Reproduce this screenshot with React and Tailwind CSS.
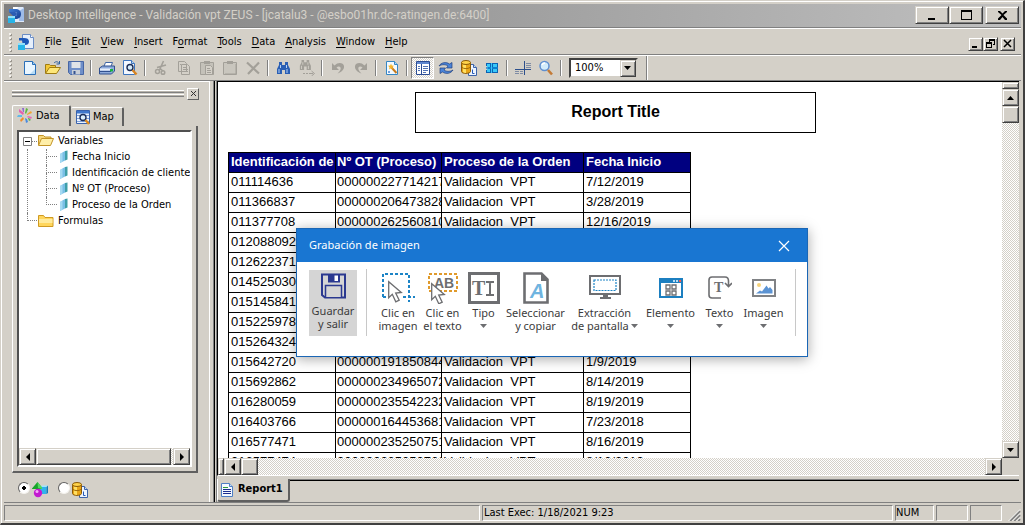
import React from "react";

const RAISED =
  "border border-t-[#d4d0c8] border-l-[#d4d0c8] border-r-[#404040] border-b-[#404040] bg-[#d4d0c8] shadow-[inset_1px_1px_0_#fff,inset_-1px_-1px_0_#808080]";
const THIN_RAISED = "border border-t-white border-l-white border-r-[#606060] border-b-[#606060] bg-[#d4d0c8]";
const SUNKEN = "border border-t-[#808080] border-l-[#808080] border-r-white border-b-white";
const DITHER = "bg-[repeating-conic-gradient(#fff_0_25%,#d4d0c8_0_50%)] bg-[length:2px_2px]";
const TAHOMA = "font-['DejaVu_Sans_Condensed','DejaVu_Sans',sans-serif] text-[11px]";

function Icon({ children }) {
  return (
    <svg width="16" height="16" viewBox="0 0 16 16" className="shrink-0" aria-hidden="true">
      {children}
    </svg>
  );
}

/* ---------- 16px icons ---------- */
function AppIcon() {
  return (
    <Icon>
      <defs>
        <linearGradient id="appBlue" x1="0" y1="0" x2="1" y2="1">
          <stop offset="0" stopColor="#3f7fd8" />
          <stop offset="1" stopColor="#12398c" />
        </linearGradient>
      </defs>
      <path d="M5 0h10l1 1v14H5z" fill="#dfeafa" />
      <path d="M5 0h5l-2 5H5z" fill="#fff" />
      <path d="M11 4l5-3v13h-5z" fill="#9dbbe8" />
      <path d="M0 9h7v7H0z" fill="#27b4e8" />
      <path d="M0 9h7v2H0z" fill="#8fe0fa" />
      <path d="M1 2h6c4 0 6 2 6 5s-2 5-6 5V9c1 0 2-.7 2-2S8 5 7 5H1z" fill="url(#appBlue)" />
      <path d="M1 5h6c1 0 2 1 2 2s-1 2-2 2H5z" fill="#2a5cb4" />
    </Icon>
  );
}
function DocIcon() {
  return (
    <Icon>
      <path d="M4.500.5h8l3 3v11h-11z" fill="#e6effb" stroke="#6a8cc4" />
      <path d="M12.500.5v3h3" fill="#fff" stroke="#6a8cc4" />
      <path d="M0 9h7v7H0z" fill="#27b4e8" />
      <path d="M0 9h7v2H0z" fill="#8fe0fa" />
      <path d="M1 4h5c3 0 5 1 5 3.500S9.500 11 7 11V9H5L4 6.500H1z" fill="#1d57b8" />
    </Icon>
  );
}
const NewIcon = () => (
  <Icon>
    <path d="M2.500 1.500h8l3 3v10h-11z" fill="#eaf6ff" stroke="#2a6fb8" />
    <path d="M10.500 1.500v3h3" fill="#9fd0f4" stroke="#2a6fb8" />
    <path d="M8 14l5-5v5z" fill="#b7dcf5" />
  </Icon>
);
const OpenIcon = () => (
  <Icon>
    <path d="M.5 13V4.500h4l1 1h5V8" fill="#f3c838" stroke="#a07c12" />
    <path d="M.5 13.500l4-6h11l-4 6z" fill="#fde77a" stroke="#a07c12" />
    <path d="M9 3c2-2 4-1.500 5 .5M14.500 1v3h-3" fill="none" stroke="#2d5f9e" />
  </Icon>
);
const SaveIcon = () => (
  <Icon>
    <path d="M.5 1.500h15v13h-13l-2-2z" fill="#6f8fc9" stroke="#4766a4" />
    <path d="M3.500 2h9v6h-9z" fill="#dfe3e8" />
    <path d="M4 10h8v4.500H4z" fill="#c9cfd8" />
    <path d="M5.500 11h2v3h-2z" fill="#35528f" />
  </Icon>
);
const PrintIcon = () => (
  <Icon>
    <path d="M6.500 2.500h7l-2 5h-7z" fill="#fff" stroke="#3d63a4" />
    <path d="M.5 8l3-2h12v5l-3 3H.5z" fill="#8fabdc" stroke="#31508f" />
    <path d="M1 8.500h11v2H1z" fill="#e8effa" />
    <path d="M1 11.500h11" stroke="#31508f" />
    <path d="M11 9h3v2.500h-3z" fill="#19b43a" />
  </Icon>
);
const PreviewIcon = () => (
  <Icon>
    <path d="M1.500.5h8l3 3v11h-11z" fill="#f3f8ff" stroke="#3d74bd" />
    <path d="M9.500.5v3h3" fill="#bcd8f4" stroke="#3d74bd" />
    <circle cx="8" cy="7.500" r="3" fill="#d5ecfb" stroke="#1b2c54" strokeWidth="1.400" />
    <path d="M10.500 10l4 4.500" stroke="#d88420" strokeWidth="2.400" />
  </Icon>
);
const G = "#a3a099";
const CutIcon = () => (
  <Icon>
    <path d="M10.500 1L6.500 10M4 7.500l9-2.500M7 8.500l3 2.500" fill="none" stroke={G} strokeWidth="1.600" />
    <circle cx="4.500" cy="11.500" r="2" fill="none" stroke={G} strokeWidth="1.500" />
    <circle cx="10" cy="12.500" r="1.800" fill="none" stroke={G} strokeWidth="1.500" />
  </Icon>
);
const CopyIcon = () => (
  <Icon>
    <path d="M2.500 1.500h6l2 2v8h-8zM5.500 4.500h6l2 2v8h-8z" fill="#d4d0c8" stroke={G} />
    <path d="M7 7.500h3M7 9.500h5M7 11.500h5M4 4.500h1" stroke={G} />
  </Icon>
);
const PasteIcon = () => (
  <Icon>
    <path d="M1.500 2.500h13v12h-13z" fill="#c4c1b9" stroke={G} />
    <path d="M5 1h6v3H5z" fill={G} />
    <path d="M6.500 5.500h5l2 2v7h-7z" fill="#d4d0c8" stroke={G} />
    <path d="M8 8.500h3M8 10.500h4M8 12.500h4" stroke={G} />
  </Icon>
);
const ClipIcon = () => (
  <Icon>
    <path d="M1.500 2.500h13v12h-13z" fill="#c9c6be" stroke={G} />
    <path d="M5 1h6v3H5z" fill={G} />
    <path d="M3 14h11M14 4v10" stroke={G} />
  </Icon>
);
const DeleteIcon = () => (
  <Icon>
    <path d="M2 2.500l12 11M14 2.500L3 14" stroke={G} strokeWidth="2.200" />
  </Icon>
);
function Binoculars({ color, light }) {
  return (
    <g>
      <path d="M3 2h3v3h3V2h3v3l2 4v5h-5v-4H6v4H1V9l2-4z" fill={color} />
      <path d="M2.500 9h1v4h-1zM10.500 9h1v4h-1zM4 5h1v3H4zM10 5h1v3h-1z" fill={light} />
    </g>
  );
}
const FindIcon = () => (
  <Icon>
    <Binoculars color="#2b5fb4" light="#b6d2f6" />
  </Icon>
);
const FindNextIcon = () => (
  <Icon>
    <g transform="translate(0 -2) scale(.85)">
      <Binoculars color={G} light="#d4d0c8" />
    </g>
    <path d="M4 13.500h2M7 13.500h2M10 13.500h4M12.500 11l3 2.500-3 2.500" fill="none" stroke={G} />
  </Icon>
);
const UndoIcon = () => (
  <Icon>
    <path d="M2 3v7h7L6.500 7.500c2-2 5-1 4 2-.5 1.500-1.500 2.500-3 4 4-1.500 7-4 6.500-7.500C13.500 2.500 8 1.500 4.500 5.500z" fill={G} />
  </Icon>
);
const RedoIcon = () => (
  <Icon>
    <path d="M14 3v7H7l2.500-2.500c-2-2-5-1-4 2 .5 1.500 1.500 2.500 3 4-4-1.500-7-4-6.500-7.500C2.500 2.500 8 1.500 11.500 5.500z" fill={G} />
  </Icon>
);
const WizardIcon = () => (
  <Icon>
    <path d="M2.500 1.500h8l3 3v10h-11z" fill="#f3faff" stroke="#3586c4" />
    <path d="M10.500 1.500v3h3" fill="#a9d8f4" stroke="#3586c4" />
    <path d="M7 7l5.500 6" stroke="#c67a1c" strokeWidth="2" />
    <path d="M7 3.500l.8 2 2.200.3-1.600 1.400.4 2.200L7 8.200l-1.900 1.200.4-2.200L4 5.800l2.200-.3z" fill="#f6b52a" />
    <path d="M4 12h2M5 11v2" stroke="#4b82d0" />
  </Icon>
);
const PanelIcon = () => (
  <Icon>
    <path d="M1.500 1.500h13v13h-13z" fill="#fff" stroke="#2b4c94" />
    <path d="M2 2h12v2H2z" fill="#5f87ce" />
    <path d="M6.500 4v10" stroke="#2b4c94" />
    <path d="M3 6.500h2M3 8.500h2M3 10.500h2M8 6.500h5M8 8.500h5M8 10.500h5M8 12.500h3" stroke="#5374b4" />
  </Icon>
);
const RefreshIcon = () => (
  <Icon>
    <path d="M1 6C3 2.500 8 1.500 11.500 4L14 2.500V8H8.500L10 6C8 4.500 4.500 4 1 6z" fill="#4a83d8" stroke="#23407c" strokeWidth=".7" />
    <path d="M15 10C13 13.500 8 14.500 4.500 12L2 13.500V8h5.500L6 10c2 1.500 5.500 2 9 0z" fill="#4a83d8" stroke="#23407c" strokeWidth=".7" />
  </Icon>
);
const DbIcon = () => (
  <Icon>
    <path d="M7.500 4.500h5l3 3v8h-8z" fill="#eef5ff" stroke="#3d63a8" />
    <path d="M12.500 4.500v3h3" fill="#c3dbf6" stroke="#3d63a8" />
    <path d="M11.500 9.500v4h2" fill="none" stroke="#2458b8" />
    <path d="M.5 2.500v9c0 2.500 9 2.500 9 0v-9z" fill="#e9a516" stroke="#8a5a08" />
    <path d="M2 4v8c1 .8 2 1 3 1V5z" fill="#ffdf63" />
    <ellipse cx="5" cy="2.500" rx="4.500" ry="2" fill="#ffd34a" stroke="#8a5a08" />
    <path d="M1 7.500c2 1.500 6 1.500 8 0" fill="none" stroke="#a06b0a" />
  </Icon>
);
const GridIcon = () => (
  <Icon>
    <path d="M2 3h5v10H2v-3h2V6H2zM8 3h6v10H8z" fill="#0b62b4" />
    <path d="M3 4h3v3H3zM3 9h3v3H3zM9 4h4v3H9zM9 9h4v3H9z" fill="#38c8f8" />
    <path d="M2 8h12" stroke="#0f8ad8" strokeWidth="1.500" />
    <path d="M7.500 3v10" stroke="#38c8f8" />
  </Icon>
);
const SliceIcon = () => (
  <Icon>
    <path d="M0 9.500h16M9.500 1v14" stroke="#2c4f8c" />
    <path d="M0 11.500h4M5 11.500h3M0 13.500h4M5 13.500h3M11 3.500h5M11 5.500h5M11 7.500h5" stroke="#7e8ba4" />
  </Icon>
);
const ZoomIcon = () => (
  <Icon>
    <circle cx="6.500" cy="6" r="4.500" fill="#d3ecfb" stroke="#5f8fd0" strokeWidth="1.500" />
    <path d="M4 5c.5-1.500 2-2 3-2" fill="none" stroke="#fff" strokeWidth="1.400" />
    <path d="M10 10l4 4.500" stroke="#c37a36" strokeWidth="2.600" />
  </Icon>
);
const DataTabIcon = () => (
  <Icon>
    <path d="M2 1l5 4-1 2-4-3z" fill="#e65fb0" />
    <path d="M9 0l2 1-2 5-1-1z" fill="#5fb83e" />
    <path d="M14 3l1 2-5 2V6z" fill="#f0a030" />
    <path d="M15 9l-1 2-4-2 1-1z" fill="#e86ab8" />
    <path d="M11 14l-2 1-1-5 2 1z" fill="#4a8ae0" />
    <path d="M4 14l-1-2 3-3 1 2z" fill="#f08c28" />
    <path d="M0 9l1-2 4 0v2z" fill="#62b8e8" />
    <path d="M5 0l2 0 0 4-1 0z" fill="#8f6ad0" />
    <path d="M12 13l2-1-2-2h-1z" fill="#58b848" />
  </Icon>
);
const MapTabIcon = () => (
  <Icon>
    <path d="M1.500 1.500h13v13h-13z" fill="#eaf2fd" stroke="#3a62ac" />
    <path d="M2 2h12v2.500H2z" fill="#3f77cc" />
    <path d="M2 6.500h12M2 9.500h12M2 12.500h12" stroke="#7fa0d8" />
    <circle cx="8" cy="8.500" r="3" fill="#dbeefb" stroke="#1c2f5c" strokeWidth="1.400" />
    <path d="M10.500 11l3.500 4" stroke="#e08a1c" strokeWidth="2.400" />
  </Icon>
);
const FolderOpenIcon = () => (
  <Icon>
    <path d="M.5 12V2.500h5l1.500 1.500h6V6" fill="#f5d67a" stroke="#c39427" />
    <path d="M.5 12.500l3-7h12l-3 7z" fill="#ffefa9" stroke="#c39427" />
  </Icon>
);
const FolderIcon = () => (
  <Icon>
    <path d="M.5 2.500h5l1.500 2h8v9H.5z" fill="#ffd65c" stroke="#cf9a22" />
    <path d="M1 6h13.500v4H1z" fill="#ffeb9c" />
  </Icon>
);
const FieldIcon = () => (
  <svg width="8" height="16" viewBox="4 0 8 16" className="shrink-0" aria-hidden="true">
    <path d="M4 5l5-3v9.500L4 14z" fill="#79bfe6" />
    <path d="M9 2l2.500-.5v9L9 11.500z" fill="#3f9fa8" />
    <path d="M4 5l2.500-1.500v9L4 14z" fill="#a5daf2" />
  </svg>
);
const ShapesIcon = () => (
  <Icon>
    <path d="M8 5h6.500v7H8z" fill="#2fb4ee" />
    <path d="M8 5l2-1.500h6L14.500 5z" fill="#9fe4ff" />
    <path d="M14.500 5L16 3.500V11l-1.500 1z" fill="#1479b8" />
    <path d="M0 6.500L5.500 0 10 5.500V7H0z" fill="#18a52a" />
    <path d="M5.500 0L10 5.500V7L6 6z" fill="#53d860" />
    <circle cx="6" cy="11" r="4.200" fill="#c21ad0" />
    <circle cx="5" cy="9.500" r="1.500" fill="#f6a8fb" />
  </Icon>
);
const ReportIcon = () => (
  <Icon>
    <path d="M2.500 1.500h8l3 3v10h-11z" fill="#f3f9ff" stroke="#4f7fc4" />
    <path d="M10.500 1.500v3h3" fill="#c3dbf6" stroke="#4f7fc4" />
    <path d="M4 5.500h5" stroke="#2f9a3c" />
    <path d="M4 7.500h8M4 9.500h8M4 11.500h8" stroke="#1c2f90" />
  </Icon>
);

/* ---------- Classic window furniture ---------- */
const GLYPHS = {
  min: <path d="M4 11h7v2H4z" />,
  max: <path d="M3 3h11v10H3zM4 5v7h9V5z" fillRule="evenodd" />,
  close: <path d="M4 4h2l2.500 2.500L11 4h2v1l-3.500 3L13 11.500V13h-2L8.500 10 6 13H4v-1.500L7.500 8 4 5z" />,
};
function CaptionButton({ kind, label }) {
  return (
    <button type="button" aria-label={label} className={`flex h-[18px] w-[34px] items-center justify-center ${RAISED}`}>
      <Icon>{GLYPHS[kind]}</Icon>
    </button>
  );
}
function MdiButton({ label, children }) {
  return (
    <button type="button" aria-label={label} className={`flex h-[14px] w-[15px] items-center justify-center ${RAISED}`}>
      <svg width="9" height="9" viewBox="0 0 9 9" aria-hidden="true">
        {children}
      </svg>
    </button>
  );
}
const ARROWS = { up: "M0 6h7L3.500 2z", down: "M0 2h7L3.500 6z", left: "M6 0v8L2 4z", right: "M2 0v8l4-4z" };
function ScrollButton({ dir }) {
  return (
    <button type="button" aria-label={`Scroll ${dir}`} className={`flex size-[17px] shrink-0 items-center justify-center ${RAISED}`}>
      <svg width="8" height="8" viewBox="0 0 8 8" aria-hidden="true">
        <path d={ARROWS[dir]} />
      </svg>
    </button>
  );
}
function Grip() {
  return (
    <span className="flex w-[3px] flex-col gap-[2px]">
      {[0, 1, 2, 3, 4].map((i) => (
        <i key={i} className="size-[2px] bg-[#f4f2ee] shadow-[1px_1px_0_#9a968e]" />
      ))}
    </span>
  );
}
function Rule() {
  return <div className="h-[2px] shrink-0 border-t border-b border-t-[#808080] border-b-white" />;
}

function TitleBar() {
  return (
    <header className="flex h-[23px] shrink-0 items-center bg-linear-to-r from-[#808080] to-[#c0c0c0] pr-[2px] pb-px pl-[4px]">
      <AppIcon />
      <h1 className="min-w-0 flex-1 truncate pl-[4px] font-[Roboto,sans-serif] text-[12px] text-[#d4d0c8]">
        Desktop Intelligence - Validación vpt ZEUS - [jcatalu3 - @esbo01hr.dc-ratingen.de:6400]
      </h1>
      <div className="flex">
        <CaptionButton kind="min" label="Minimize" />
        <CaptionButton kind="max" label="Maximize" />
        <span className="w-[2px]" />
        <CaptionButton kind="close" label="Close" />
      </div>
    </header>
  );
}

const MENUS = [
  ["", "F", "ile"],
  ["", "E", "dit"],
  ["", "V", "iew"],
  ["", "I", "nsert"],
  ["F", "o", "rmat"],
  ["", "T", "ools"],
  ["", "D", "ata"],
  ["", "A", "nalysis"],
  ["", "W", "indow"],
  ["", "H", "elp"],
];
function MenuBar() {
  return (
    <nav className="flex h-[25px] shrink-0 items-center pr-[6px] pl-[5px]">
      <Grip />
      <span className="mr-[10px] ml-[6px]">
        <DocIcon />
      </span>
      <div className={`flex flex-1 gap-[10px] pt-px pl-px ${TAHOMA}`}>
        {MENUS.map(([pre, key, post]) => (
          <button type="button" key={pre + key + post}>
            {pre}
            <u className="underline-offset-2">{key}</u>
            {post}
          </button>
        ))}
      </div>
      <div className="flex pt-1">
        <MdiButton label="Minimize document">
          <path d="M1 7h5v2H1z" />
        </MdiButton>
        <MdiButton label="Restore document">
          <path d="M3 0h6v6H7V5h1V2H4v1H3zM0 3h6v6H0zM1 5v3h4V5z" fillRule="evenodd" />
        </MdiButton>
        <span className="w-[2px]" />
        <MdiButton label="Close document">
          <path d="M1 1l7 7M8 1L1 8" stroke="#000" strokeWidth="1.500" />
        </MdiButton>
      </div>
    </nav>
  );
}

const TOOLS = [
  [["New", NewIcon], ["Open", OpenIcon], ["Save", SaveIcon]],
  [["Print", PrintIcon], ["Print preview", PreviewIcon]],
  [["Cut", CutIcon], ["Copy", CopyIcon], ["Paste", PasteIcon], ["Paste special", ClipIcon], ["Delete", DeleteIcon]],
  [["Find", FindIcon], ["Find next", FindNextIcon]],
  [["Undo", UndoIcon], ["Redo", RedoIcon]],
  [["Edit data provider", WizardIcon]],
  [["Report manager", PanelIcon], ["Refresh", RefreshIcon], ["View data", DbIcon], ["Structure", GridIcon]],
  [["Slice and dice", SliceIcon], ["Zoom", ZoomIcon]],
];
function Separator() {
  return (
    <span className="flex w-2 justify-center">
      <i className="h-4 w-[2px] border-r border-l border-r-white border-l-[#808080]" />
    </span>
  );
}
function ToolBar() {
  return (
    <div className="flex h-[24px] shrink-0 items-center pl-[5px]">
      <Grip />
      <div className="flex items-center pl-[6px]">
        {TOOLS.map((group, g) => (
          <div key={g} className="flex items-center">
            {group.map(([label, Glyph]) => (
              <button
                type="button"
                key={label}
                aria-label={label}
                className={
                  label === "Report manager"
                    ? `flex h-[22px] w-[23px] items-center justify-center ${SUNKEN} ${DITHER}`
                    : "flex h-[22px] w-[23px] items-center justify-center"
                }
              >
                <Glyph />
              </button>
            ))}
            <Separator />
          </div>
        ))}
      </div>
      <div className="ml-[4px] grid h-[20px] w-[69px] border-2 border-t-[#404040] border-r-[#d4d0c8] border-b-[#d4d0c8] border-l-[#404040] bg-white">
        <select
          aria-label="Zoom level"
          defaultValue="100%"
          className={`col-start-1 row-start-1 w-full appearance-none bg-transparent pl-1 outline-none ${TAHOMA}`}
        >
          <option>100%</option>
        </select>
        <span className={`pointer-events-none col-start-1 row-start-1 flex w-4 items-center justify-center justify-self-end ${RAISED}`}>
          <svg width="8" height="8" viewBox="0 0 8 8" aria-hidden="true">
            <path d="M0 2h7L3.500 6z" />
          </svg>
        </span>
      </div>
      <i className="ml-2 h-[24px] w-[2px] border-r border-l border-r-white border-l-[#808080]" />
    </div>
  );
}

/* ---------- Left panel ---------- */
const FIELDS = ["Fecha Inicio", "Identificación de cliente", "Nº OT (Proceso)", "Proceso de la Orden"];
function Tree() {
  return (
    <ul className={`min-h-0 flex-1 overflow-hidden pt-px pl-1 ${TAHOMA} leading-4 whitespace-nowrap`}>
      <li>
        <div className="flex h-4 items-center">
          <svg width="9" height="9" viewBox="0 0 9 9" aria-hidden="true">
            <path d="M.5.5h8v8h-8z" fill="#fff" stroke="#808080" />
            <path d="M2 4.500h5" stroke="#000" />
          </svg>
          <i className="mr-px w-[5px] border-t border-dotted border-[#808080]" />
          <FolderOpenIcon />
          <span className="pl-1">Variables</span>
        </div>
        <ul className="ml-1 border-l border-dotted border-[#808080] pl-[18px]">
          {FIELDS.map((name, i) => (
            <li key={name} className="flex h-4">
              <span className="mr-[3px] flex w-[11px] shrink-0 flex-col">
                <i className="h-2 w-full border-b border-l border-dotted border-[#808080]" />
                {i < FIELDS.length - 1 && <i className="h-2 border-l border-dotted border-[#808080]" />}
              </span>
              <FieldIcon />
              <span className="pl-1">{name}</span>
            </li>
          ))}
        </ul>
      </li>
      <li className="flex h-4 pl-1">
        <i className="mr-px h-2 w-[10px] border-b border-l border-dotted border-[#808080]" />
        <FolderIcon />
        <span className="pl-1">Formulas</span>
      </li>
    </ul>
  );
}
const RADIO =
  "mb-1 size-3 appearance-none rounded-full border border-t-[#606060] border-r-[#f4f2ee] border-b-[#f4f2ee] border-l-[#606060] bg-white checked:bg-[radial-gradient(circle,#000_2px,#fff_2px)]";
function SidePanel() {
  return (
    <aside className="flex w-[206px] shrink-0 flex-col border-t border-r border-white pt-[5px] pl-2">
      <div className="flex h-[13px] items-center gap-[3px]">
        <div className="flex w-[172px] flex-col gap-px">
          <i className="h-[3px] border-t border-b border-t-white border-b-[#808080] bg-[#b8b4ac]" />
          <i className="h-[3px] border-t border-b border-t-white border-b-[#808080] bg-[#b8b4ac]" />
        </div>
        <button type="button" aria-label="Close panel" className={`flex size-3 items-center justify-center ${THIN_RAISED}`}>
          <svg width="7" height="7" viewBox="0 0 7 7" aria-hidden="true">
            <path d="M1 1l5 5M6 1L1 6" stroke="#333" />
          </svg>
        </button>
      </div>
      <div role="tablist" className={`mt-[5px] flex h-[21px] items-end ${TAHOMA}`}>
        <button
          type="button"
          role="tab"
          aria-selected="true"
          className="flex h-[21px] w-[59px] items-center gap-[3px] rounded-t-[2px] border-t border-r-2 border-l border-t-white border-r-[#606060] border-l-white pl-1"
        >
          <DataTabIcon />
          Data
        </button>
        <button
          type="button"
          role="tab"
          aria-selected="false"
          className="flex h-[19px] w-[53px] items-center gap-[2px] rounded-t-[2px] border-t border-r-2 border-t-white border-r-[#606060] pl-1"
        >
          <MapTabIcon />
          Map
        </button>
      </div>
      <div className="flex min-h-0 w-[186px] flex-1 flex-col border-r-2 border-b-2 border-l border-r-[#606060] border-b-[#606060] border-l-white pr-[4px] pb-[4px] pl-[4px]">
        <div className="mt-[4px] flex min-h-0 flex-1 flex-col border-2 border-t-[#505050] border-r-white border-b-white border-l-[#505050] bg-white">
          <Tree />
          <div className={`flex ${DITHER}`}>
            <ScrollButton dir="left" />
            <i className={`h-[17px] flex-1 ${RAISED}`} />
            <i className="w-[2px]" />
            <ScrollButton dir="right" />
          </div>
        </div>
      </div>
      <div className="flex h-[29px] shrink-0 items-center gap-[10px] pt-1 pl-[6px]">
        <label className="flex items-center gap-[2px]">
          <input type="radio" name="view" defaultChecked aria-label="By object" className={RADIO} />
          <ShapesIcon />
        </label>
        <label className="flex items-center gap-[2px]">
          <input type="radio" name="view" aria-label="By data provider" className={RADIO} />
          <DbIcon />
        </label>
      </div>
    </aside>
  );
}

/* ---------- Report ---------- */
const COLUMNS = ["Identificación de cliente", "Nº OT (Proceso)", "Proceso de la Orden", "Fecha Inicio"];
const V = "Validacion  VPT";
const ROWS = [
  ["011114636", "000000227714217", V, "7/12/2019"],
  ["011366837", "000000206473828", V, "3/28/2019"],
  ["011377708", "000000262560810", V, "12/16/2019"],
  ["012088092", "", "", ""],
  ["012622371", "", "", ""],
  ["014525030", "", "", ""],
  ["015145841", "", "", ""],
  ["015225978", "", "", ""],
  ["015264324", "", "", ""],
  ["015642720", "000000191850844", V, "1/9/2019"],
  ["015692862", "000000234965072", V, "8/14/2019"],
  ["016280059", "000000235542232", V, "8/19/2019"],
  ["016403766", "000000164453681", V, "7/23/2018"],
  ["016577471", "000000235250751", V, "8/16/2019"],
  ["016577474", "000000235250763", V, "8/16/2019"],
];
function Report() {
  return (
    <main className="min-w-0 flex-1 overflow-hidden bg-white pt-[10px] pl-[10px] font-['Liberation_Sans',Arial,sans-serif]">
      <h2 className="ml-[187px] flex h-[41px] w-[401px] items-center justify-center border border-black pb-[2px] text-[16px] font-bold">
        Report Title
      </h2>
      <table className="mt-[19px] w-[463px] table-fixed border-collapse text-[13px] leading-[18px]">
        <colgroup>
          <col className="w-[107px]" />
          <col className="w-[106px]" />
          <col className="w-[142px]" />
          <col className="w-[107px]" />
        </colgroup>
        <thead>
          <tr className="h-[20px] bg-[#000080] text-left text-white">
            {COLUMNS.map((c, i) => (
              <th
                key={c}
                className={`overflow-hidden border border-black p-0 pb-px font-bold whitespace-pre ${i === 1 ? "pl-px" : "pl-[2px]"}`}
              >
                {c}
              </th>
            ))}
          </tr>
        </thead>
        <tbody>
          {ROWS.map((row) => (
            <tr key={row[0]} className="h-[20px]">
              {row.map((cell, i) => (
                <td
                  key={i}
                  className={`overflow-hidden border border-black p-0 pb-px whitespace-pre ${i === 1 ? "pl-px" : "pl-[2px]"}`}
                >
                  {cell}
                </td>
              ))}
            </tr>
          ))}
        </tbody>
      </table>
    </main>
  );
}
function ReportPane() {
  return (
    <section className="flex min-w-0 flex-1 flex-col">
      <div className="flex min-h-0 flex-1 flex-col border-t border-b border-l border-t-black border-b-white border-l-black">
        <div className="flex min-h-0 flex-1">
          <Report />
          <div className={`flex w-[17px] flex-col ${DITHER}`}>
            <i className={`h-[7px] shrink-0 ${RAISED}`} />
            <ScrollButton dir="up" />
            <i className={`h-[17px] ${RAISED}`} />
            <span className="flex-1" />
            <ScrollButton dir="down" />
          </div>
        </div>
        <div className="flex">
          <div className={`flex flex-1 ${DITHER}`}>
            <i className={`w-[6px] ${RAISED}`} />
            <ScrollButton dir="left" />
            <i className={`size-[17px] ${RAISED}`} />
            <span className="flex-1" />
            <ScrollButton dir="right" />
          </div>
          <span className="w-[17px]" />
        </div>
      </div>
      <div className="flex h-[26px] shrink-0 items-start pt-[3px]">
        <button
          type="button"
          className={`flex h-[23px] w-[73px] items-center gap-[3px] rounded-b-[3px] border-r-2 border-b-2 border-l border-r-[#606060] border-b-[#606060] border-l-white pl-px font-bold ${TAHOMA}`}
        >
          <ReportIcon />
          Report1
        </button>
        <i className="h-[2px] flex-1 border-t border-b border-t-[#808080] border-b-black" />
      </div>
    </section>
  );
}

function StatusBar() {
  return (
    <footer className={`flex h-[21px] shrink-0 items-start gap-[2px] border-t border-[#808080] pt-[2px] ${TAHOMA} leading-[14px]`}>
      <span className={`h-[16px] w-[476px] ${SUNKEN}`} />
      <span className={`h-[16px] flex-1 pl-px ${SUNKEN}`}>Last Exec: 1/18/2021 9:23</span>
      <span className={`h-[16px] w-[39px] ${SUNKEN}`}>NUM</span>
      <span className={`h-[16px] w-[32px] ${SUNKEN}`} />
      <span className={`h-[16px] w-[32px] ${SUNKEN}`} />
      <svg width="17" height="16" viewBox="0 0 17 16" aria-hidden="true">
        <path d="M6 16L16 6M10 16l6-6M14 16l2-2" stroke="#808080" strokeWidth="2" />
        <path d="M4.500 16L16 4.500M8.500 16L16 8.500M12.500 16l3.500-3.500" stroke="#fff" />
      </svg>
    </footer>
  );
}

/* ---------- Recorder dialog ---------- */
const Cursor = ({ x, y }) => (
  <path
    transform={`translate(${x} ${y})`}
    d="M.7.700v16l3.600-3.400 3.500 7.500 3.400-1.600-3.500-7.200 5.600-.5z"
    fill="#fff"
    stroke="#6d6e71"
    strokeWidth="1.300"
  />
);
function RecSave() {
  return (
    <svg width="25" height="26" viewBox="0 0 25 26" aria-hidden="true">
      <path d="M1 1.500h23v23H4L1 22z" fill="#d5d5d5" stroke="#2b3990" strokeWidth="2" />
      <path d="M7 1h12v8.500H7z" fill="#2b3990" />
      <path d="M13.500 2.500h3.500v5.500h-3.500z" fill="#fff" />
      <path d="M4.500 24V12.500h16V24" fill="#d5d5d5" stroke="#2b3990" strokeWidth="1.500" />
    </svg>
  );
}
function RecClick() {
  return (
    <svg width="34" height="32" viewBox="0 0 34 32" aria-hidden="true">
      <path d="M2 25V2h26v28" fill="none" stroke="#1c84c6" strokeWidth="2" strokeDasharray="3 2" />
      <path d="M2 25h5M22 25h12" stroke="#1c84c6" strokeWidth="2" strokeDasharray="3 2" />
      <Cursor x={7} y={9} />
    </svg>
  );
}
function RecClickText() {
  return (
    <svg width="32" height="32" viewBox="0 0 32 32" aria-hidden="true">
      <path d="M2 2h28v17H2z" fill="none" stroke="#e09a2b" strokeWidth="2" strokeDasharray="3 2" />
      <text x="7" y="16" fontFamily="Liberation Sans" fontWeight="bold" fontSize="14" fill="#6d6e71">
        AB
      </text>
      <Cursor x={4} y={11} />
    </svg>
  );
}
function RecType() {
  return (
    <svg width="32" height="32" viewBox="0 0 32 32" aria-hidden="true">
      <path d="M1.500 1.500h29v29h-29z" fill="#fff" stroke="#6d6e71" strokeWidth="3" />
      <text x="4" y="23" fontFamily="Liberation Serif" fontWeight="bold" fontSize="20" fill="#6d6e71">
        T
      </text>
      <path d="M18 10h3l1 1 1-1h3M18 23h3l1-1 1 1h3M22 10v13" fill="none" stroke="#6d6e71" strokeWidth="2" />
    </svg>
  );
}
function RecCopy() {
  return (
    <svg width="26" height="32" viewBox="0 0 26 32" aria-hidden="true">
      <path d="M1.500 1.500h17l6 6v23h-23z" fill="#fff" stroke="#6d6e71" strokeWidth="2.600" />
      <path d="M18 1v8h7z" fill="#6d6e71" />
      <text x="7" y="26" fontFamily="Liberation Sans" fontWeight="bold" fontStyle="italic" fontSize="20" fill="#6fb4e0">
        A
      </text>
    </svg>
  );
}
function RecScreen() {
  return (
    <svg width="32" height="25" viewBox="0 0 32 25" aria-hidden="true">
      <path d="M1 1h30v18H1z" fill="#fff" stroke="#6d6e71" strokeWidth="2" />
      <path d="M5 5h22v10.500H5z" fill="none" stroke="#1c84c6" strokeWidth="1.200" strokeDasharray="2 1" />
      <path d="M14 20h5v2h3v2H11v-2h3z" fill="#6d6e71" />
    </svg>
  );
}
function RecElement() {
  return (
    <svg width="24" height="20" viewBox="0 0 24 20" aria-hidden="true">
      <path d="M1 1h22v18H1z" fill="#fff" stroke="#1c7fc0" strokeWidth="2" />
      <path d="M0 0h24v5H0z" fill="#1c7fc0" />
      <path d="M14 2h2v2h-2zM17 2h2v2h-2z" fill="#b9dcf2" />
      <path d="M20 2h2v2h-2z" fill="#f05a50" />
      <path d="M7 7h4v4H7zM13 7h4v4h-4zM7 13h4v4H7zM13 13h4v4h-4z" fill="none" stroke="#6d6e71" strokeWidth="1.300" />
    </svg>
  );
}
function RecText() {
  return (
    <svg width="24" height="24" viewBox="0 0 24 24" aria-hidden="true">
      <path d="M13 22H4q-3 0-3-3V4q0-3 3-3h13q3.500 0 3.500 4v5M17 7l3.500 3.500L24 7" fill="none" stroke="#6d6e71" strokeWidth="1.600" />
      <text x="6" y="16" fontFamily="Liberation Serif" fontWeight="bold" fontSize="14" fill="#6d6e71">
        T
      </text>
    </svg>
  );
}
function RecImage() {
  return (
    <svg width="24" height="18" viewBox="0 0 24 18" aria-hidden="true">
      <path d="M1 1h22v16H1z" fill="#fff" stroke="#808285" strokeWidth="2" />
      <circle cx="7" cy="6" r="2" fill="#f6d27a" />
      <path d="M4 14.500l4-3 2 1 4.500-6 2 3 1.500-1.500 2.500 3v3.500z" fill="#5b93d3" />
    </svg>
  );
}
const Caret = () => (
  <svg width="7" height="4" viewBox="0 0 7 4" className="inline-block" aria-hidden="true">
    <path d="M0 0h7L3.500 4z" fill="#6d6e71" />
  </svg>
);
const ACTIONS = [
  { id: "ci", w: "w-[44px]", art: <RecClick />, a: "Clic en", b: "imagen" },
  { id: "ct", w: "w-[45px]", art: <RecClickText />, a: "Clic en", b: "el texto" },
  { id: "ti", w: "w-[37px]", art: <RecType />, a: "Tipo", caret: true },
  { id: "sc", w: "w-[67px]", art: <RecCopy />, a: "Seleccionar", b: "y copiar" },
  { id: "ex", w: "w-[71px]", art: <RecScreen />, a: "Extracción", b: "de pantalla", caret: true },
  { id: "el", w: "w-[61px]", art: <RecElement />, a: "Elemento", caret: true },
  { id: "te", w: "w-[37px]", art: <RecText />, a: "Texto", caret: true },
  { id: "im", w: "w-[51px]", art: <RecImage />, a: "Imagen", caret: true },
];
function RecorderDialog() {
  return (
    <div
      role="dialog"
      aria-label="Grabación de imagen"
      className="absolute top-[227px] left-[295px] w-[512px] border border-[#1a66b5] bg-white font-['Noto_Sans',sans-serif] text-[11px] shadow-[0_2px_12px_rgba(0,0,0,0.35)]"
    >
      <div className="flex h-[33px] items-center justify-between bg-[#1976d2] pr-[17px] pl-3 text-white">
        <span>Grabación de imagen</span>
        <button type="button" aria-label="Cerrar">
          <svg width="12" height="12" viewBox="0 0 12 12" aria-hidden="true">
            <path d="M1 1l10 10M11 1L1 11" stroke="#fff" strokeWidth="1.200" />
          </svg>
        </button>
      </div>
      <div className="flex h-[94px] pt-[7px] pl-3 leading-[13px] text-[#3c3c3c]">
        <button type="button" className="mt-px flex h-[66px] w-[48px] flex-col items-center bg-[#d5d5d5] pt-[3px]">
          <span className="flex h-[31px] items-start">
            <RecSave />
          </span>
          <span>Guardar</span>
          <span>y salir</span>
        </button>
        <i className="mr-[9px] ml-[9px] h-[67px] w-px bg-[#c8c8c8]" />
        {ACTIONS.map((t) => (
          <button type="button" key={t.id} className={`flex h-[67px] flex-col items-center whitespace-nowrap ${t.w}`}>
            <span className="flex h-[37px] shrink-0 items-center">{t.art}</span>
            <span>{t.a}</span>
            <span className="flex h-[13px] items-center gap-[2px]">
              {t.b}
              {t.caret && <Caret />}
            </span>
          </button>
        ))}
        <i className="ml-[6px] h-[67px] w-px bg-[#c8c8c8]" />
      </div>
    </div>
  );
}

export default function App() {
  return (
    <div className="relative flex h-screen flex-col overflow-hidden border-t border-r-2 border-b-2 border-l border-t-[#d4d0c8] border-r-[#404040] border-b-[#404040] border-l-[#d4d0c8] bg-[#d4d0c8] text-black">
      <div className="flex min-h-0 flex-1 flex-col border-t border-l border-white pt-[2px] pr-[2px] pl-[2px]">
        <TitleBar />
        <Rule />
        <MenuBar />
        <Rule />
        <ToolBar />
        <div className="flex min-h-0 flex-1 border-t border-t-[#808080] pr-[2px]">
          <SidePanel />
          <i className="w-[3px]" />
          <i className="w-[2px] border-r border-l border-r-black border-l-[#808080]" />
          <i className="w-[2px] border-r border-r-[#808080]" />
          <ReportPane />
        </div>
        <StatusBar />
      </div>
      <RecorderDialog />
    </div>
  );
}
